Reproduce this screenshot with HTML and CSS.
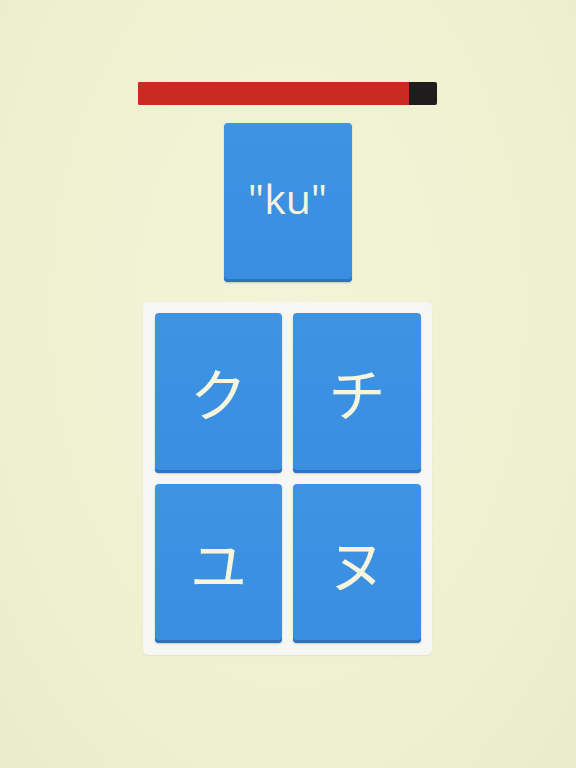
FILE: index.html
```html
<!DOCTYPE html>
<html lang="ja">
<head>
<meta charset="utf-8">
<link rel="stylesheet" href="styles.css">
</head>
<body>
<main class="screen">
  <div class="timer">
    <div class="timer-fill" style="width: 90.6%"></div>
  </div>
  <div class="card prompt"><span class="prompt-text">"ku"</span></div>
  <div class="choices">
    <div class="card choice">ク</div>
    <div class="card choice">チ</div>
    <div class="card choice">ユ</div>
    <div class="card choice">ヌ</div>
  </div>
</main>
</body>
</html>
```
FILE: styles.css
```css
html, body {
  margin: 0;
  padding: 0;
}
body {
  width: 576px;
  height: 768px;
  background: radial-gradient(ellipse at 50% 40%, #f3f5d8 0%, #eef0cf 70%, #e9ecc9 100%);
  font-family: "Open Sans", "Noto Sans CJK JP", sans-serif;
  overflow: hidden;
}
.screen {
  display: flex;
  flex-direction: column;
  align-items: center;
  padding-top: 82px;
  padding-right: 1px;
}
.timer {
  width: 299px;
  height: 23px;
  background: #1e1c1d;
  border-radius: 2px;
  overflow: hidden;
  display: flex;
}
.timer-fill {
  height: 100%;
  background: #c92b22;
}
.card {
  background: linear-gradient(180deg, #3e93e3 0%, #3a8ee0 100%);
  border-radius: 4px;
  box-shadow: inset 0 -3px 0 #2f72bd, 0 1px 2px rgba(0,0,0,0.18);
  color: #f6f6df;
  display: flex;
  align-items: center;
  justify-content: center;
  box-sizing: border-box;
}
.prompt {
  width: 128px;
  height: 159px;
  margin-top: 18px;
}
.prompt-text {
  font-family: "Open Sans", sans-serif;
  font-size: 41px;
  margin-top: -10px;
}
.choices {
  margin-top: 20px;
  width: 289px;
  box-sizing: border-box;
  padding: 11px 11px 12px 12px;
  background: #f6f6f3;
  border-radius: 5px;
  display: grid;
  grid-template-columns: 127px 128px;
  grid-template-rows: 160px 159px;
  gap: 11px;
  box-shadow: 0 1px 2px rgba(0,0,0,0.06);
}
.choice {
  font-family: "Noto Sans CJK JP", sans-serif;
  font-weight: 400;
  font-size: 57px;
  padding-bottom: 4px;
}
```
